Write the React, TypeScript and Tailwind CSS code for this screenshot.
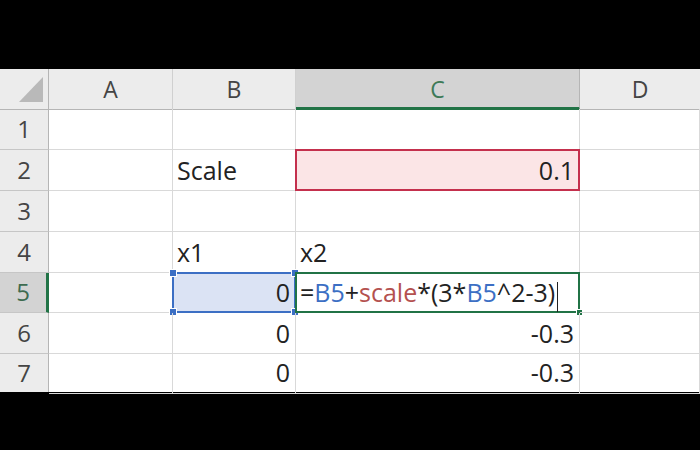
import React from 'react';

const font = { fontFamily: '"Open Sans", "Liberation Sans", sans-serif' };

const rowHeights = ['h-[41px]', 'h-[41px]', 'h-[41px]', 'h-[41px]', 'h-[40px]', 'h-[41px]', 'h-[38px]'];

function Handle({ pos }: { pos: string }) {
  return <div className={`absolute w-[8px] h-[8px] bg-[#3c6fc4] border border-white ${pos}`}></div>;
}

function Cell({ children, right, className = '' }: { children?: React.ReactNode; right?: boolean; className?: string }) {
  return (
    <div
      className={`relative flex items-end border-r border-b border-[#d9d9d9] pb-[1px] ${right ? 'justify-end pr-[5px]' : 'pl-[4px]'} ${className}`}
    >
      {children}
    </div>
  );
}

export default function App() {
  const rows = [1, 2, 3, 4, 5, 6, 7];

  const renderRow = (r: number) => {
    const rowHead = (
      <div
        className={`flex items-end justify-center pb-[2px] text-[24px] border-b border-[#c6c6c6] ${
          r === 5 ? 'bg-[#d3d3d3] text-[#3d6b50] border-r-[3px] border-r-[#217346]' : 'bg-[#ececec] text-[#444] border-r border-r-[#b5b5b5]'
        }`}
      >
        {r}
      </div>
    );

    let b: React.ReactNode = <Cell />;
    let c: React.ReactNode = <Cell />;

    if (r === 2) {
      b = <Cell>Scale</Cell>;
      c = (
        <Cell right className="bg-[#fbe5e6]">
          <div className="absolute -left-px -top-px right-[-1px] bottom-[-1px] border-2 border-[#c4304d]"></div>
          <span className="relative">0.1</span>
        </Cell>
      );
    }
    if (r === 4) {
      b = <Cell>x1</Cell>;
      c = <Cell>x2</Cell>;
    }
    if (r === 5) {
      b = (
        <Cell right className="bg-[#dbe3f4]">
          <div className="absolute -left-px -top-px right-[-1px] bottom-[-1px] border-2 border-[#3c6fc4]"></div>
          <Handle pos="-left-[4px] -top-[4px]" />
          <Handle pos="-right-[4px] -top-[4px]" />
          <Handle pos="-left-[4px] -bottom-[4px]" />
          <Handle pos="-right-[4px] -bottom-[4px]" />
          <span className="relative">0</span>
        </Cell>
      );
      c = (
        <Cell className="bg-white">
          <div className="absolute -left-px -top-px right-[-1px] bottom-[-1px] border-2 border-[#217346]"></div>
          <div className="absolute right-[-4px] bottom-[-4px] w-[7px] h-[7px] bg-[#217346] border border-white"></div>
          <span className="relative flex items-end">
            <span>=</span>
            <span className="text-[#3c6fc4]">B5</span>
            <span>+</span>
            <span className="text-[#b4514f]">scale</span>
            <span>*(3*</span>
            <span className="text-[#3c6fc4]">B5</span>
            <span>^2-3)</span>
            <span className="ml-[2px] w-px h-[30px] bg-[#222] mb-[-1px]"></span>
          </span>
        </Cell>
      );
    }
    if (r === 6 || r === 7) {
      b = <Cell right>0</Cell>;
      c = <Cell right>-0.3</Cell>;
    }

    return (
      <div key={r} className={`grid grid-cols-[49px_124px_123px_284px_1fr] ${rowHeights[r - 1]}`}>
        {rowHead}
        <Cell />
        {b}
        {c}
        <Cell />
      </div>
    );
  };

  return (
    <div className="w-[700px] h-[450px] bg-black flex flex-col overflow-hidden text-[25px] text-[#222]" style={font}>
      <div className="h-[69px] shrink-0 bg-black"></div>
      <div className="bg-white shrink-0">
        <div className="grid grid-cols-[49px_124px_123px_284px_1fr] h-[40px] text-[23px]">
          <div className="relative bg-[#ececec] border-r border-b border-[#b5b5b5]">
            <svg className="absolute left-[19px] top-[8px]" width="24" height="25" viewBox="0 0 24 25">
              <polygon points="24,0 24,25 0,25" fill="#b9b9b9" />
            </svg>
          </div>
          <div className="flex items-center justify-center bg-[#ececec] border-r border-b border-r-[#d0d0d0] border-b-[#b5b5b5] text-[#444]">A</div>
          <div className="flex items-center justify-center bg-[#ececec] border-r border-b border-r-[#d0d0d0] border-b-[#b5b5b5] text-[#444]">B</div>
          <div className="flex items-center justify-center bg-[#d3d3d3] border-r border-r-[#b5b5b5] border-b-[3px] border-b-[#217346] text-[#3d7a57] pt-[3px]">C</div>
          <div className="flex items-center justify-center bg-[#ececec] border-b border-b-[#b5b5b5] text-[#444]">D</div>
        </div>
        {rows.map(renderRow)}
      </div>
      <div className="flex-1 bg-black"></div>
    </div>
  );
}
